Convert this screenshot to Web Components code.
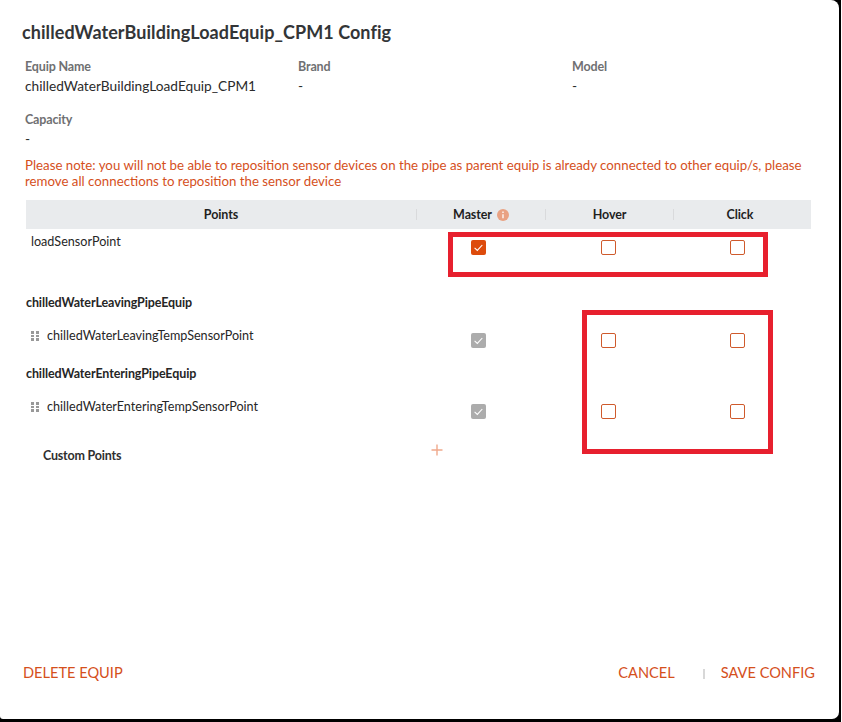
<!DOCTYPE html>
<html>
<head>
<meta charset="utf-8">
<title>Config</title>
<style>
  html { height: 100%; background: #fff; }
  body { margin: 0; width: 841px; height: 722px; background: #000; font-family: Lato, "Open Sans", sans-serif; overflow: hidden; }
</style>
</head>
<body>
<config-dialog>
  <span slot="title">chilledWaterBuildingLoadEquip_CPM1 Config</span>
  <info-field label="Equip Name" value="chilledWaterBuildingLoadEquip_CPM1"></info-field>
  <info-field label="Brand" value="-"></info-field>
  <info-field label="Model" value="-"></info-field>
  <info-field label="Capacity" value="-"></info-field>
</config-dialog>

<script>
const CHECK = `<svg viewBox="0 0 15 15" width="15" height="15"><path d="M3.6 7.9l2.7 2.5 5-5.4" fill="none" stroke="#fff" stroke-width="1.1"/></svg>`

class InfoField extends HTMLElement {
  constructor() {
    super()
    this.attachShadow({mode: 'open'}).innerHTML = `
      <style>
        :host { display: block; height: 53px; }
        .label { font-size: 12.5px; font-weight: 700; color: #6f7072; line-height: 16px; letter-spacing: -0.15px; }
        .value { font-size: 13.7px; color: #2b2b2b; line-height: 16px; margin-top: 3px; }
      </style>
      <div class="label">${this.getAttribute('label')}</div>
      <div class="value">${this.getAttribute('value')}</div>
    `
  }
}
customElements.define('info-field', InfoField)

class PointCheck extends HTMLElement {
  constructor() {
    super()
    const state = this.getAttribute('state')
    this.attachShadow({mode: 'open'}).innerHTML = `
      <style>
        :host { display: block; width: 15px; height: 15px; }
        .box { width: 15px; height: 15px; box-sizing: border-box; border-radius: 2px; }
        .off { border: 1px solid #cf5a2c; background: #fff; }
        .on { background: #dd4b0c; }
        .locked { background: #acacac; }
        svg { display: block; }
      </style>
      <div class="box ${state}">${state === 'off' ? '' : CHECK}</div>
    `
  }
}
customElements.define('point-check', PointCheck)

class PointsHeader extends HTMLElement {
  constructor() {
    super()
    this.attachShadow({mode: 'open'}).innerHTML = `
      <style>
        :host {
          display: grid; grid-template-columns: 391px 129px 128px 137px;
          height: 29px; align-items: center; background: #e9ebed;
          font-size: 12.5px; font-weight: 700; color: #1f1f1f; letter-spacing: -0.1px;
        }
        .cell { display: flex; align-items: center; justify-content: center; gap: 5px; height: 11px; border-right: 1px solid #d9dadc; }
        .cell:first-child { padding-left: 11px; }
        .cell:last-child { border-right: 0; padding-right: 5px; }
        .info {
          width: 12px; height: 12px; border-radius: 50%; background: #e9a283;
          display: grid; place-items: center;
        }
      </style>
      <div class="cell">Points</div>
      <div class="cell">Master
        <span class="info"><svg width="12" height="12" viewBox="0 0 12 12"><path d="M6 2.6v1.3M6 5.2v4" stroke="#fff" stroke-width="1.3" fill="none"/></svg></span>
      </div>
      <div class="cell">Hover</div>
      <div class="cell">Click</div>
    `
  }
}
customElements.define('points-header', PointsHeader)

class PointRow extends HTMLElement {
  constructor() {
    super()
    const master = this.getAttribute('master')
    const drag = this.hasAttribute('drag')
    this.attachShadow({mode: 'open'}).innerHTML = `
      <style>
        :host {
          display: grid; grid-template-columns: 391px 129px 128px 137px;
          font-size: 12.6px; color: #262626; line-height: 16px;
        }
        .name { display: flex; align-items: center; gap: 8px; padding-left: 5px; height: 16px; }
        .dots { display: grid; grid-template-columns: 3px 3px; gap: 1.2px 2px; width: 8px; }
        .dots i { width: 3px; height: 2.6px; background: #999; }
        point-check { margin-left: 54px; margin-top: var(--check-top, 5px); }
        point-check.hover { margin-left: 55px; width: 14px; }
        point-check.last { margin-left: 56px; }
      </style>
      <div class="name">
        ${drag ? '<span class="dots"><i></i><i></i><i></i><i></i><i></i><i></i></span>' : ''}
        <span>${this.getAttribute('name')}</span>
      </div>
      <point-check state="${master}"></point-check>
      <point-check class="hover" state="off"></point-check>
      <point-check class="last" state="off"></point-check>
    `
  }
}
customElements.define('point-row', PointRow)

class ConfigDialog extends HTMLElement {
  constructor() {
    super()
    this.attachShadow({mode: 'open'}).innerHTML = `
      <style>
        :host {
          display: flex; flex-direction: column; position: relative;
          width: 839px; height: 719px; box-sizing: border-box;
          background: #fff; border-radius: 0 8px 7px 3px;
          color: #2b2b2b;
        }
        h1 { margin: 21px 0 0 22px; font-size: 18px; line-height: 23px; font-weight: 700; color: #333537; letter-spacing: 0.07px; }
        .info { display: grid; grid-template-columns: 273px 274px 240px; margin: 15px 0 0 25px; }
        .note { margin: -8px 0 0 25px; width: 790px; font-size: 13.27px; line-height: 16px; color: #d5501c; }
        .table { margin: 11px 0 0 26px; width: 785px; }
        point-row.first { margin-top: 5px; --check-top: 6px; height: 50px; }
        .group { font-size: 12.5px; font-weight: 700; color: #262626; line-height: 16px; letter-spacing: -0.1px; }
        .g1 { margin-top: 11px; }
        .r1 { margin-top: 17px; height: 22px; }
        .g2 { margin-top: 16px; }
        .r2 { margin-top: 17px; height: 22px; }
        .custom { display: flex; margin: 21px 0 0 17px; height: 30px; font-size: 12.5px; font-weight: 700; color: #2f2f2f; line-height: 16px; letter-spacing: -0.2px; }
        .custom span { width: 387px; padding-top: 6px; }
        .custom svg { display: block; margin-top: 1px; }
        .footer {
          margin-top: auto; padding: 0 24px 36px 23px;
          display: flex; align-items: center; font-size: 14.6px; color: #d5501c; line-height: 20px;
        }
        .footer .sep { width: 2px; height: 10px; background: #d8d8d8; margin: 2px 16px 0 28px; }
        .footer .spacer { flex: 1; }
        .mark { position: absolute; border: 5px solid #e7202e; box-sizing: border-box; }
      </style>
      <h1><slot name="title"></slot></h1>
      <div class="info"><slot></slot></div>
      <div class="note">Please note: you will not be able to reposition sensor devices on the pipe as parent equip is already connected to other equip/s, please remove all connections to reposition the sensor device</div>
      <div class="table">
        <points-header></points-header>
        <point-row class="first" name="loadSensorPoint" master="on"></point-row>
        <div class="group g1">chilledWaterLeavingPipeEquip</div>
        <point-row class="r1" drag name="chilledWaterLeavingTempSensorPoint" master="locked"></point-row>
        <div class="group g2">chilledWaterEnteringPipeEquip</div>
        <point-row class="r2" drag name="chilledWaterEnteringTempSensorPoint" master="locked"></point-row>
        <div class="custom"><span>Custom Points</span>
          <svg width="14" height="14" viewBox="0 0 14 14"><path d="M7 1.5v11M1.5 7h11" stroke="#f0a98c" stroke-width="1.4" fill="none"/></svg>
        </div>
      </div>
      <div class="footer">
        <span>DELETE EQUIP</span>
        <span class="spacer"></span>
        <span>CANCEL</span>
        <span class="sep"></span>
        <span>SAVE CONFIG</span>
      </div>
      <div class="mark" style="left:448px;top:232px;width:320px;height:45px"></div>
      <div class="mark" style="left:582px;top:310px;width:191px;height:144px"></div>
    `
  }
}
customElements.define('config-dialog', ConfigDialog)
</script>
</body>
</html>
